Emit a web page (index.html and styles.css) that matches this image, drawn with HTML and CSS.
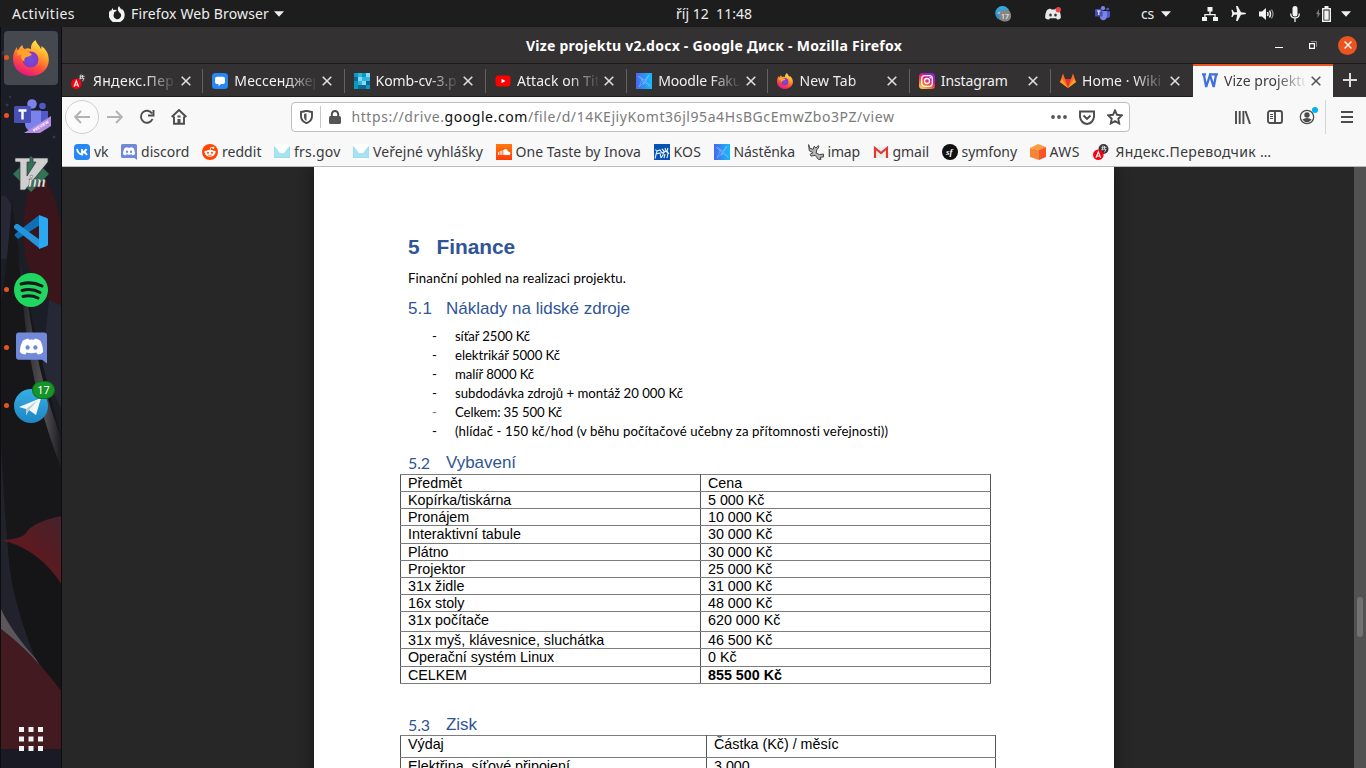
FILE: index.html
```html
<!DOCTYPE html>
<html lang="cs">
<head>
<meta charset="utf-8">
<title>Vize projektu v2.docx - Google Диск</title>
<link rel="stylesheet" href="styles.css">
</head>
<body>
<svg class="defs" width="0" height="0">
  <defs>
    <linearGradient id="gFox" x1=".8" y1="0" x2=".35" y2="1"><stop offset="0" stop-color="#fff44f"/><stop offset=".4" stop-color="#ffa02b"/><stop offset=".7" stop-color="#ff4a3d"/><stop offset="1" stop-color="#e31587"/></linearGradient>
    <radialGradient id="gOrb"><stop offset="0" stop-color="#6f52d8"/><stop offset="1" stop-color="#8636c9"/></radialGradient>
    <linearGradient id="gMood" x1="0" y1="0" x2="1" y2="0"><stop offset="0" stop-color="#4a67ee"/><stop offset="1" stop-color="#12bdf8"/></linearGradient>
    <linearGradient id="gInsta" x1="0.2" y1="1" x2=".8" y2="0"><stop offset="0" stop-color="#ffd04f"/><stop offset=".35" stop-color="#fa5b35"/><stop offset=".6" stop-color="#e0168a"/><stop offset="1" stop-color="#7a25e0"/></linearGradient>
    <linearGradient id="gTele" x1="0" y1="0" x2="0" y2="1"><stop offset="0" stop-color="#37aee2"/><stop offset="1" stop-color="#1d86c4"/></linearGradient>
    <linearGradient id="gSound" x1="0" y1="0" x2="0" y2="1"><stop offset="0" stop-color="#ff7a0e"/><stop offset="1" stop-color="#ff3a08"/></linearGradient>
    <linearGradient id="gStem" x1="0" y1="0" x2="1" y2="0"><stop offset="0" stop-color="#777379" stop-opacity="0"/><stop offset=".6" stop-color="#625f65"/><stop offset="1" stop-color="#19191b"/></linearGradient>
    <linearGradient id="gPetal" x1="0" y1="1" x2="1" y2="0"><stop offset="0" stop-color="#5b151b"/><stop offset=".5" stop-color="#5d1a20"/><stop offset="1" stop-color="#44232c"/></linearGradient>
    <symbol id="firefox" viewBox="0 0 36 36">
      <path fill="url(#gFox)" d="M22.500 0c1 3.500 4 5.500 5.500 9 .5-.5.5-1.500.3-3C33 9 36 14 35.800 20.500 35.400 30 27.500 36 18 36S0 29 0 18.500C0 14 1.600 10 4 7c0 2 .4 2.700.8 3.300C6.200 8 7.500 6.300 9.500 5c-.1 2 .8 3.300 2 4 2.500-1 4.800-.8 6.500.2C17.500 6 19 2.500 22.500 0z"/>
      <circle cx="17.500" cy="19.500" r="8" fill="url(#gOrb)"/>
      <path fill="#ffa42c" d="M4.500 11c3-.6 5.800-.6 8.500.8 2.800.2 5 1 5.800 2.800-1.300 1.800-3 2-5.200 2.400-2.500 1-2.600 2.500-2 4.500-3-1-4-4-3-6.500-1.500-.4-3 0-4.100 1z"/>
    </symbol>
    <symbol id="teams" viewBox="0 0 36 34">
      <circle cx="18" cy="5" r="4.800" fill="#7b83eb"/><circle cx="28.500" cy="7" r="3.300" fill="#5059c9"/>
      <path fill="#5059c9" d="M24 12h10v9a5 5 0 0 1-9 4z"/><path fill="#7b83eb" d="M11 11.500h16V24c0 10-16 12-16 0z"/>
      <rect y="7" width="17" height="17" rx="1.500" fill="#4750b5"/><path stroke="#fff" stroke-width="2.400" d="M4.500 11.500h8M8.500 11v9.500"/>
    </symbol>
    <symbol id="discord" viewBox="0 0 32 32">
      <path fill="#7289da" d="M3 0h26a3 3 0 0 1 3 3v29l-5-4H3a3 3 0 0 1-3-3V3a3 3 0 0 1 3-3z"/>
      <path fill="#fff" d="M7 8.500c3-2 5-2.300 6-2l.6 1q2.600-.4 5 0l.6-1c1-.3 3 0 6 2C27 12 28 16.500 28 20c-1.500 1.800-3.500 2.500-5.500 2.600L21 20.700q-5 1.500-10 0l-1.500 1.900C7.500 22.500 5.500 21.800 4 20c0-3.500 1-8 3-11.500z"/>
      <ellipse cx="12" cy="15.500" rx="2.200" ry="2.400" fill="#7289da"/><ellipse cx="20" cy="15.500" rx="2.200" ry="2.400" fill="#7289da"/>
    </symbol>
    <symbol id="mood" viewBox="0 0 16 16"><path fill="url(#gMood)" d="M0 0h16v16H0z"/><path fill="none" stroke="#a6c4ff" stroke-opacity=".55" stroke-width=".7" d="M2 3l4 3 3 1 4-5-3 6 4 5-6-4-5 5 3-7zM6 6l2 5M12 3L7 12M4 3l7 8"/></symbol>
    <symbol id="transl" viewBox="0 0 16 16"><circle cx="10.500" cy="5" r="5" fill="#383639"/><path fill="none" stroke="#ddd" stroke-width=".9" d="M8.500 3.300h5M10 1.500l-1 5M8.500 5.300h4.500l-1.500 3M11.500 2v3"/><circle cx="5.300" cy="10.700" r="5.300" fill="#f80010"/><path fill="none" stroke="#fff" stroke-width="1.100" d="M3 13.700l2.300-6 2.300 6M3.600 12h3.600"/></symbol>
    <symbol id="frs" viewBox="0 0 16 16"><path fill="#fff" d="M0 0h16v16H0z"/><path fill="#8fdcf0" d="M0 2l3 3 2 3 1 1h4l1-1 2-3 3-3v12H0z"/><path stroke="#fff" stroke-opacity=".45" stroke-width=".5" d="M2 0v16M4 0v16M6 0v16M8 0v16M10 0v16M12 0v16M14 0v16M0 6h16M0 8h16M0 10h16M0 12h16"/></symbol>
    <symbol id="close" viewBox="0 0 10 10"><path d="M.7.700l8.600 8.600M9.300.700L.7 9.300" stroke="currentColor" stroke-width="1.600"/></symbol>
    <symbol id="tri" viewBox="0 0 10 6"><path fill="currentColor" d="M0 .3h10L5 5.700z"/></symbol>
  </defs>
</svg>

<header class="topbar">
  <span class="activities" data-w="63">Activities</span>
  <svg class="appicon" viewBox="0 0 16 16"><path fill="#f2f2f2" d="M10 0c.5 1.500 2 2.500 2.600 4V2.500A8 8 0 1 1 1.300 4l.5 1.500L3.500 2l1 2 3-.3-.3 1.600-2 .7-.3 2a3.700 3.700 0 1 0 5.600-1.600C9 5.500 8 2.500 10 0z"/></svg>
  <span data-w="138">Firefox Web Browser</span>
  <svg class="tri app-tri"><use href="#tri"/></svg>
  <span class="clock" data-w="76">říj 12&nbsp; 11:48</span>
  <div class="tray">
    <div class="slot wide"><svg width="16" height="16" viewBox="0 0 16 16"><circle cx="7.500" cy="7.300" r="7.300" fill="url(#gTele)"/><path fill="#ddd" d="M2 7l8-3-1 6z"/><rect x="4" y="4" width="12" height="11.500" rx="5" fill="#858585"/><text x="10" y="13" class="tiny-count">17</text></svg></div>
    <div class="slot wide"><svg width="16" height="14" viewBox="0 0 16 14"><path fill="#e8e8e8" d="M2 3c2-1.500 4-1.600 4-1l.4.600h3.200L10 2c1-.5 2.500 0 4 1 1.200 2 2 5 1.800 8-1 1-2.500 1.600-3.600 1.600l-1-1.300H5l-1 1.300C2.700 12.600 1.300 12 .2 11 0 8 .8 5 2 3z"/><ellipse cx="5.500" cy="8" rx="1.300" ry="1.500" fill="#333"/><ellipse cx="10.500" cy="8" rx="1.300" ry="1.500" fill="#333"/><circle cx="13.300" cy="2.700" r="2.700" fill="#ef4146"/></svg></div>
    <div class="slot wide"><svg width="16" height="15"><use href="#teams"/></svg></div>
    <div class="slot lang"><span data-w="13">cs</span><svg class="tri"><use href="#tri"/></svg></div>
    <div class="slot s28"><svg width="16" height="14" viewBox="0 0 16 14" fill="#f2f2f2"><path d="M5.500 0h5v4.500H8.700V7h5v3H16v4h-5v-4h1.500V8.200h-9V10H5v4H0v-4h2.300V7h5V4.500H5.500z"/></svg></div>
    <div class="slot s29"><svg width="15" height="15" viewBox="0 0 15 15" fill="#f2f2f2"><path d="M5 0h1.700l3.300 6.300 4 .4q1 .3 1 .8t-1 .8l-4 .4L6.700 15H5l1.200-6.300H3l-1.500 2.200H.4L1.200 7.500.4 3.800h1.100L3 6.300h3.200z"/></svg></div>
    <div class="slot s28"><svg width="16" height="14" viewBox="0 0 16 14"><path fill="#f2f2f2" d="M0 4.500h3l4-3.500v12L3 9.500H0z"/><path fill="none" stroke="#f2f2f2" stroke-width="1.500" d="M8.500 5q1 2 0 4M10.500 3.500q2 3.500 0 7"/><path fill="none" stroke="#999" stroke-width="1.200" d="M12.500 2.500q3 4.500 0 9"/></svg></div>
    <div class="slot s27"><svg width="10" height="16" viewBox="0 0 10 16"><rect x="2.500" width="5" height="10.500" rx="2.500" fill="#f2f2f2"/><path fill="none" stroke="#f2f2f2" stroke-width="1.300" d="M.7 7.500c0 6 8.600 6 8.600 0M5 12v4"/></svg></div>
    <div class="slot s30"><svg width="15" height="16" viewBox="0 0 15 16"><path fill="#777" d="M3 3v4h1.500L1.500 12V8H0z"/><path fill="none" stroke="#f2f2f2" stroke-width="1.400" d="M6.700 2.700h7.600v12.600H6.700z"/><path fill="#f2f2f2" d="M8.500 0h4v2h-4zM8.300 4.500h4.400v9.200H8.300z"/></svg></div>
    <div class="slot s16"><svg class="tri"><use href="#tri"/></svg></div>
  </div>
</header>

<div class="desktop">
  <nav class="dock">
    <svg class="wallpaper" viewBox="0 27 62 741" preserveAspectRatio="none">
      <path fill="#1b1d27" d="M0 27h62v741H0z"/>
      <path fill="#262836" d="M0 197q6-4 9 4l5 8 1 30-9 20H0zM50 290h12v120l-20-40z"/>
      <circle cx="25" cy="37" r="1.500" fill="#383b48"/><circle cx="4" cy="53" r="2.500" fill="#30333e"/><circle cx="10" cy="97" r="1.200" fill="#343744"/><circle cx="54" cy="137" r="1.500" fill="#343744"/><circle cx="7" cy="105" r="1.500" fill="#343744"/>
      <path fill="#3a151b" d="M31 180q12-8 20 10 9 20 11 45v70q-22-4-33-36-6-18-6-40 2-30 8-49z"/>
      <path fill="#17171a" d="M12 198q3 30 8 60 14 78 42 182v180H0V310q8-50 12-112z"/>
      <path fill="url(#gStem)" opacity=".8" d="M17 245q7 30 13 73 12 72 32 122v30Q34 400 25 323z"/>
      <path fill="#22222c" d="M1 440q6 130 14 155l20 65L1 620z"/>
      <path fill="url(#gPetal)" d="M2 540q20-1 24-7 6-11 36-17v70Q38 551 2 540z"/>
      <path fill="#151517" d="M8 542q33 10 54 43v107L35 658Q8 590 8 542z"/>
      <path fill="#5b565a" d="M1 609q10 22 35 50l6 10L1 629z"/>
      <path fill="#431a20" d="M1 629q30 22 61 63v60H1z"/>
      <path fill="#191a23" d="M1 749h61v19H1z"/><path fill="#0d0d0f" d="M0 27h1v741H0zM61 27h1v741h-1z"/>
    </svg>
    <div class="launchers">
      <div class="app focused running"><svg width="36" height="36"><use href="#firefox"/></svg></div>
      <div class="app running"><svg class="nudge" width="37" height="34" viewBox="0 0 37 34"><use href="#teams" width="36" height="34"/><path fill="#b58ae2" d="M10 34L37 17v10L26 34z"/><text class="preview" transform="translate(20 33) rotate(-32)">PREVIEW</text></svg></div>
      <div class="app"><svg width="36" height="36" viewBox="0 0 36 36"><path fill="#327257" d="M18 0l18 18-18 18L0 18z"/><path fill="#cfcfcf" stroke="#333" stroke-width=".7" d="M2 2h15v4h-3v14L23 6h-3V2h15v4L12 34H7V6H2z"/><text x="15" y="31" class="vim">im</text></svg></div>
      <div class="app"><svg width="34" height="34" viewBox="0 0 34 34"><path fill="#0f70b5" d="M2 22l-1-1q-1-1 0-2L24 1l2 1v8L4 24zM25 0l1 10-11 7z"/><path fill="#2494dc" d="M2 9L0 11q-1 1 0 2l25 20 1-8L4 9z"/><path fill="#2aa8f2" d="M25 0l8 3q1 .5 1 2v24q0 2-1 2l-8 3z"/></svg></div>
      <div class="app running"><svg width="34" height="34" viewBox="0 0 34 34"><circle cx="17" cy="17" r="17" fill="#1fd660"/><path fill="none" stroke="#191919" stroke-width="3" stroke-linecap="round" d="M7 11q11-3 21 2M8 17.500q10-2.500 18 2M9 23.500q8-2 15 1.500"/></svg></div>
      <div class="app running"><svg width="31" height="32"><use href="#discord"/></svg></div>
      <div class="app running"><svg width="34" height="34" viewBox="0 0 34 34"><circle cx="17" cy="17" r="17" fill="url(#gTele)"/><path fill="#f5f8fa" d="M5 18L27 9l-5 17-7-5-3 5v-6z"/><path fill="#b6cbdc" d="M12 20l12-9-9 10-3 5z"/></svg><b class="badge">17</b></div>
    </div>
    <svg class="grid-icon" viewBox="0 0 24 24" fill="#f2f2f2"><path d="M0 0h5v5H0zM9.500 0h5v5h-5zM19 0h5v5h-5zM0 9.500h5v5H0zM9.500 9.500h5v5h-5zM19 9.500h5v5h-5zM0 19h5v5H0zM9.500 19h5v5h-5zM19 19h5v5h-5z"/></svg>
  </nav>

  <main class="window">
    <div class="titlebar">
      <b data-w="376">Vize projektu v2.docx - Google Диск - Mozilla Firefox</b>
      <div class="wincontrols">
        <i class="minimize"></i>
        <svg width="8" height="8" viewBox="0 0 8 8" fill="none"><path stroke="#888" d="M2 .5h5.500V6"/><path stroke="#fff" stroke-width="1.200" d="M.6 2.600h4.800v4.800H.6z"/></svg>
        <span class="winclose"><svg width="8" height="8"><use href="#close"/></svg></span>
      </div>
    </div>

    <div class="tabs">
      <div class="tab"><svg class="fav"><use href="#transl"/></svg><span class="label"><span data-w="81">Яндекс.Пер</span></span><svg class="x"><use href="#close"/></svg></div>
      <div class="tab"><svg class="fav" viewBox="0 0 16 16"><rect width="16" height="16" rx="3.500" fill="#2787f5"/><path fill="#fff" d="M5 3.700h6a2 2 0 0 1 2 2V9a2 2 0 0 1-2 2H9l-2.500 2.200V11H5a2 2 0 0 1-2-2V5.700a2 2 0 0 1 2-2z"/></svg><span class="label"><span data-w="87">Мессенджер</span></span><svg class="x"><use href="#close"/></svg></div>
      <div class="tab"><svg class="fav" viewBox="0 0 16 16"><path fill="#0b6994" d="M0 0h16v16H0z"/><path fill="#0799c8" d="M0 0h4v4H0zM8 0h4v4H8zM0 8h4v8H0zM12 12h4v4h-4z"/><path fill="#32b4df" d="M4 0h4v4H4zM4 8h4v4H4zM8 4h4v4H8zM12 4h4v4h-4z"/><path fill="#82dcf4" d="M4 4h4v4H4zM12 0h4v4h-4zM8 8h4v4H8z"/></svg><span class="label"><span data-w="81">Komb-cv-3.p</span></span><svg class="x"><use href="#close"/></svg></div>
      <div class="tab"><svg class="fav" viewBox="0 0 16 16"><rect y="2.500" x=".5" width="15" height="11" rx="3" fill="#f00"/><path fill="#fff" d="M6.500 5.700v4.600l4-2.300z"/></svg><span class="label"><span data-w="83">Attack on Tit</span></span><svg class="x"><use href="#close"/></svg></div>
      <div class="tab"><svg class="fav"><use href="#mood"/></svg><span class="label"><span data-w="83">Moodle Faku</span></span><svg class="x"><use href="#close"/></svg></div>
      <div class="tab"><svg class="fav"><use href="#firefox"/></svg><span class="label"><span data-w="57">New Tab</span></span><svg class="x"><use href="#close"/></svg></div>
      <div class="tab"><svg class="fav" viewBox="0 0 16 16"><rect width="16" height="16" rx="3.500" fill="url(#gInsta)"/><g fill="none" stroke="#fff" stroke-width="1.300"><rect x="2.700" y="2.700" width="10.600" height="10.600" rx="3"/><circle cx="8" cy="8" r="2.500"/></g><circle cx="11.200" cy="4.800" r=".8" fill="#fff"/></svg><span class="label plain"><span data-w="67">Instagram</span></span><svg class="x"><use href="#close"/></svg></div>
      <div class="tab"><svg class="fav" viewBox="0 0 16 16"><path fill="#fc6d26" d="M0 9l3-8.500L5 6h6l2-5.500L16 9l-8 6z"/><path fill="#e5342c" d="M5 6h6l-3 9z"/><path fill="#fca326" d="M0 9l2-3 6 9zM16 9l-2-3-6 9z"/></svg><span class="label"><span data-w="79">Home · Wiki</span></span><svg class="x"><use href="#close"/></svg></div>
      <div class="tab active"><svg class="fav" viewBox="0 0 16 16"><path fill="none" stroke="#3f6fe0" stroke-width="2.300" d="M0 1.300h4M1.700 1l2.500 13L8 2l3.700 12 2.500-13M8 1.300h8"/></svg><span class="label"><span data-w="86">Vize projektu</span></span><svg class="x"><use href="#close"/></svg></div>
      <svg class="newtab" viewBox="0 0 14 14"><path stroke="#ddd" stroke-width="2" d="M7 0v14M0 7h14"/></svg>
    </div>

    <div class="navbar">
      <span class="back"><svg width="16" height="14" viewBox="0 0 16 14"><path class="faint" d="M7 1L1.200 7 7 13M1.500 7H16"/></svg></span>
      <svg width="16" height="14" viewBox="0 0 16 14"><path class="faint" d="M9 1l5.800 6L9 13M14.500 7H0"/></svg>
      <svg width="16" height="16" viewBox="0 0 16 16"><path class="ink" d="M13 4.500A6 6 0 1 0 13.500 10M14.500 1v5.500H9"/></svg>
      <svg width="16" height="16" viewBox="0 0 16 16"><path class="ink" d="M.7 8L8 1l7.300 7M3 7.500v7.300h10V7.500"/><path fill="#4c4c4e" d="M6.500 10h3v5h-3zM6.500 6.500h3v2h-3z"/></svg>
      <div class="urlbar">
        <svg width="13" height="14" viewBox="0 0 13 14"><path class="ink" d="M1 2q3-.5 5.500-1.200Q9 1.500 12 2v4c0 4-2.500 6-5.500 7.200C3.500 12 1 10 1 6z"/><path fill="#555" d="M6.500 3.200L4 4v3c0 2 1 3.200 2.500 4z"/></svg>
        <i class="rule"></i>
        <svg width="12" height="14" viewBox="0 0 12 14"><rect y="6" width="12" height="8" rx="1.500" fill="#555"/><path class="ink" d="M2.800 7V4q.5-3 3.200-3t3.200 3v3"/></svg>
        <span class="url" data-w="543">https://drive.<em>google.com</em>/file/d/14KEjiyKomt36jl95a4HsBGcEmwZbo3PZ/view</span>
        <div class="urlactions">
          <svg width="16" height="4" viewBox="0 0 16 4" fill="#555"><circle cx="2" cy="2" r="1.900"/><circle cx="8" cy="2" r="1.900"/><circle cx="14" cy="2" r="1.900"/></svg>
          <svg width="16" height="15" viewBox="0 0 16 15"><path class="ink" d="M1 1.500h14V7q-1 6-7 7Q2 13 1 7zM4.500 5.500L8 9l3.500-3.500"/></svg>
          <svg width="16" height="16" viewBox="0 0 16 16"><path class="ink" d="M8 1.500l2 4.300 4.800.6-3.500 3.300.9 4.800L8 12.200l-4.200 2.300.9-4.800L1.200 6.400 6 5.800z"/></svg>
        </div>
      </div>
      <div class="tools">
        <svg width="16" height="14" viewBox="0 0 16 14"><path class="ink" d="M1 1v13M4.700 1v13M8.400 1v13M10.500 1l4.500 13"/></svg>
        <svg width="16" height="14" viewBox="0 0 16 14"><rect class="ink" x="1" y="1" width="14" height="12" rx="2"/><path class="ink" d="M8 1v12"/><path stroke="#4c4c4e" d="M3 4.500h3M3 6.500h3M3 8.500h3"/></svg>
        <svg width="19" height="18" viewBox="0 0 19 18"><circle cx="8" cy="10" r="6.700" fill="none" stroke="#4c4c4e" stroke-width="1.300"/><circle cx="8" cy="8" r="2.700" fill="#4c4c4e"/><path fill="#4c4c4e" d="M3.300 12.500Q8 9.500 12.700 12.500 8 18 3.300 12.500z"/><circle cx="16" cy="3" r="3" fill="#00b3f4"/></svg>
        <i class="toolrule"></i>
        <svg width="12" height="12" viewBox="0 0 12 12"><path class="ink" d="M0 1h12M0 6h12M0 11h12"/></svg>
      </div>
    </div>

    <div class="bookmarks">
      <a><svg class="fav" viewBox="0 0 16 16"><rect width="16" height="16" rx="3.500" fill="#2787f5"/><path fill="none" stroke="#fff" stroke-width="1.800" d="M3 5q1 5 5 5.500V5M8 8.200Q11 8 12.500 5M8 8q3.500 0 5 3"/></svg><span data-w="14.5">vk</span></a>
      <a><svg class="fav"><use href="#discord"/></svg><span data-w="48.5">discord</span></a>
      <a><svg class="fav" viewBox="0 0 16 16"><circle cx="8" cy="8" r="8" fill="#ff4500"/><ellipse cx="8" cy="9.300" rx="5" ry="3.500" fill="#fff"/><circle cx="3.500" cy="8" r="1.200" fill="#fff"/><circle cx="12.500" cy="8" r="1.200" fill="#fff"/><circle cx="11.300" cy="3.800" r="1.100" fill="#fff"/><path fill="none" stroke="#fff" stroke-width=".8" d="M8 6.500l.8-3.200 2.500.5"/><circle cx="6" cy="8.800" r="1" fill="#ff4500"/><circle cx="10" cy="8.800" r="1" fill="#ff4500"/><path fill="none" stroke="#ff4500" stroke-width=".7" d="M6 11q2 1 4 0"/></svg><span data-w="39.5">reddit</span></a>
      <a><svg class="fav"><use href="#frs"/></svg><span data-w="46.5">frs.gov</span></a>
      <a><svg class="fav"><use href="#frs"/></svg><span data-w="110">Veřejné vyhlášky</span></a>
      <a><svg class="fav" viewBox="0 0 16 16"><path fill="url(#gSound)" d="M0 0h16v16H0z"/><path fill="#fff" d="M8 11V5.500q3-1.500 4 2 2.500 0 2.500 2 0 1.500-2 1.500z"/><path stroke="#fff" stroke-width=".9" d="M2.500 8v3M4.200 7v4M5.800 6.500V11M7.300 6v5"/></svg><span data-w="125.5">One Taste by Inova</span></a>
      <a><svg class="fav" viewBox="0 0 16 16"><path fill="#0754b4" d="M0 0h16v16H0z"/><path fill="none" stroke="#e6f0fc" stroke-width="1.100" d="M1.500 5.500l1.500 2-1 3-1 4M2 10l4-1 1 5M3 7l3-1 2 3 2-1M8 5l2 2-1 4-2 3M9 9l3-2 2 2-1 5M11 4l1 3M14 4l-1 3 2 3M11 10l-1 4"/></svg><span data-w="27.5">KOS</span></a>
      <a><svg class="fav"><use href="#mood"/></svg><span data-w="61.5">Nástěnka</span></a>
      <a><svg class="fav" viewBox="0 0 16 16"><path fill="#b5b5b5" stroke="#444" stroke-width="1" d="M.6.600l1.200 3.600 3.400 1.200 1-3.200L8 4l2.300-2.500.7 1.400-2.300 3-.5 3.300 3.400 1.400 3.800-.6v3l-3.200.3.800 2.100h-2.600l-3.100-4-4.300.7-.8-1.800L5 8.500 1.300 6.800z"/></svg><span data-w="32.5">imap</span></a>
      <a><svg class="fav" viewBox="0 0 16 16"><path fill="#eee" d="M1 3h14v11H1z"/><path fill="none" stroke="#dd3c35" stroke-width="2.200" d="M2 14V4l6 5 6-5v10"/></svg><span data-w="36.5">gmail</span></a>
      <a><svg class="fav" viewBox="0 0 16 16"><circle cx="8" cy="8" r="8" fill="#111"/><text x="4" y="11" class="sf">sf</text></svg><span data-w="55.5">symfony</span></a>
      <a><svg class="fav" viewBox="0 0 16 16"><path fill="#ff9b3b" d="M8 0l8 3-7 3L0 4z"/><path fill="#f68536" d="M0 4l9 2v10l-9-3z"/><path fill="#f9542b" d="M16 3v10l-7 3V6z"/></svg><span data-w="30.5">AWS</span></a>
      <a class="roomy"><svg class="fav"><use href="#transl"/></svg><span data-w="156">Яндекс.Переводчик …</span></a>
    </div>

    <div class="viewer">
      <article class="page">
        <h1><span class="num" data-w="11.6">5</span><span data-w="78.5">Finance</span></h1>
        <p class="body intro"><span data-w="218">Finanční pohled na realizaci projektu.</span></p>
        <h2 class="h51"><span class="num" data-w="24">5.1</span><span data-w="184">Náklady na lidské zdroje</span></h2>
        <ul class="body costs">
          <li><span data-w="75">síťař 2500 Kč</span></li>
          <li><span data-w="105">elektrikář 5000 Kč</span></li>
          <li><span data-w="79">malíř 8000 Kč</span></li>
          <li><span data-w="228">subdodávka zdrojů + montáž 20 000 Kč</span></li>
          <li class="light"><span data-w="107">Celkem: 35 500 Kč</span></li>
          <li><span data-w="433.5">(hlídač - 150 kč/hod (v běhu počítačové učebny za přítomnosti veřejnosti))</span></li>
        </ul>
        <h2 class="h52"><span class="num alt" data-w="22">5.2</span><span data-w="70">Vybavení</span></h2>
        <table class="equipment">
          <tr><td>Předmět</td><td>Cena</td></tr>
          <tr><td>Kopírka/tiskárna</td><td>5 000 Kč</td></tr>
          <tr><td>Pronájem</td><td>10 000 Kč</td></tr>
          <tr><td>Interaktivní tabule</td><td>30 000 Kč</td></tr>
          <tr><td>Plátno</td><td>30 000 Kč</td></tr>
          <tr><td>Projektor</td><td>25 000 Kč</td></tr>
          <tr><td>31x židle</td><td>31 000 Kč</td></tr>
          <tr><td>16x stoly</td><td>48 000 Kč</td></tr>
          <tr class="tall"><td>31x počítače</td><td>620 000 Kč</td></tr>
          <tr><td>31x myš, klávesnice, sluchátka</td><td>46 500 Kč</td></tr>
          <tr><td>Operační systém Linux</td><td>0 Kč</td></tr>
          <tr><td>CELKEM</td><td><b>855 500 Kč</b></td></tr>
        </table>
        <h2 class="h53"><span class="num alt" data-w="22">5.3</span><span data-w="31">Zisk</span></h2>
        <table class="profit">
          <tr><td>Výdaj</td><td>Částka (Kč) / měsíc</td></tr>
          <tr><td>Elektřina, síťové připojení</td><td>3 000</td></tr>
        </table>
      </article>
      <div class="scrollbar"><i></i></div>
    </div>
  </main>
</div>
<script src="fit.js"></script>
</body>
</html>
```
FILE: styles.css
```css
* { box-sizing: border-box; }
body { margin: 0; width: 1366px; height: 768px; overflow: hidden; background: #272727; font: 14px/20px "Noto Sans", sans-serif; }
svg { display: block; flex: none; }
[data-w] { display: inline-block; white-space: pre; }
.defs { position: absolute; }

.topbar { position: relative; display: flex; align-items: center; height: 27px; padding-left: 12px; background: #1d1d1d; color: #eee; }
.appicon { width: 16px; height: 16px; margin: 0 6px 0 34px; }
.tri { width: 10px; height: 6px; }
.app-tri { margin-left: 5px; }
.clock { margin-left: 392px; }
.tray { display: flex; height: 27px; margin-left: auto; padding-right: 12px; }
.slot { display: flex; align-items: center; justify-content: center; }
.wide { width: 50px; }
.lang { width: 68px; gap: 7px; justify-content: flex-start; padding-left: 13px; }
.s28 { width: 28px; }
.s29 { width: 29px; }
.s27 { width: 27px; }
.s30 { width: 30px; }
.s16 { width: 16px; }
.tiny-count { font: 7px "Noto Sans", sans-serif; fill: #fff; text-anchor: middle; }

.desktop { display: flex; height: 741px; }
.dock { position: relative; width: 62px; height: 741px; display: flex; flex-direction: column; justify-content: space-between; align-items: center; padding: 2px 0 17px; }
.wallpaper { position: absolute; inset: 0; width: 62px; height: 741px; }
.launchers { position: relative; }
.app { position: relative; display: flex; align-items: center; justify-content: center; width: 54px; height: 54px; margin: 2px 0 4px; border-radius: 4px; }
.focused { background: #46484f; }
.running::before { content: ""; position: absolute; left: 0; top: 24px; width: 5px; height: 5px; border-radius: 50%; background: #e95420; }
.nudge { margin-left: 3px; }
.preview { font: bold 4px "Noto Sans", sans-serif; fill: #fff; }
.vim { font: italic bold 17px "Liberation Serif", serif; fill: #eee; stroke: #333; stroke-width: .4px; }
.badge { position: absolute; left: 28px; top: 2px; width: 23px; height: 18px; border-radius: 9px; border: 1px solid #0c6b1c; background: #169427; color: #fff; font: 11px/16px "Noto Sans", sans-serif; text-align: center; }
.grid-icon { position: relative; width: 24px; height: 24px; }

.window { width: 1304px; height: 741px; display: flex; flex-direction: column; }
.titlebar { position: relative; height: 37px; display: flex; align-items: center; justify-content: center; padding: 1px 0 0; background: #333132; border-bottom: 1px solid #1c1b1c; color: #fff; }
.wincontrols { position: absolute; right: 9px; top: 8px; display: flex; align-items: center; height: 20px; }
.minimize { width: 8px; height: 1px; margin: 4px 26px 0 0; background: #fff; }
.winclose { display: grid; place-items: center; width: 19px; height: 19px; margin-left: 21px; border-radius: 50%; background: #e95420; color: #fff; }

.tabs { height: 33px; display: flex; background: #333132; color: #f0f0f0; }
.tab { position: relative; width: 141.3px; flex: none; display: flex; align-items: center; padding: 2px 0 0 9px; border-bottom: 1px solid #1c1b1c; }
.tab::after { content: ""; position: absolute; right: 0; top: 5px; width: 1px; height: 24px; background: #646263; }
.tab:nth-child(8)::after, .active::after { display: none; }
.fav { width: 16px; height: 16px; overflow: hidden; }
.label { width: 81px; margin: 0 6.500px 0 6px; overflow: hidden; white-space: nowrap; -webkit-mask-image: linear-gradient(90deg, #000 52px, transparent 84px); mask-image: linear-gradient(90deg, #000 52px, transparent 84px); }
.plain { -webkit-mask-image: none; mask-image: none; }
.x { width: 10px; height: 10px; color: #dedede; }
.active { width: 140px; margin-left: .6px; background: #f8f8f8; color: #3d3d3d; border-top: 2px solid #e95420; border-bottom: 0; padding: 0 0 1px 9px; }
.active .x { color: #555; }
.newtab { width: 14px; height: 14px; margin: 9px 0 0 10px; }

.navbar { height: 41px; display: flex; align-items: center; padding: 0 0 1px 3px; background: #f8f8f8; }
.back { display: grid; place-items: center; width: 34px; height: 34px; margin-right: 8px; border: 1px solid #cfcfcf; border-radius: 50%; background: #fbfbfb; }
.navbar > svg { margin-right: 16px; }
.faint { fill: none; stroke: #b3b3b3; stroke-width: 1.9; }
.ink { fill: none; stroke: #4c4c4e; stroke-width: 1.9; }
.urlbar { display: flex; align-items: center; width: 839px; height: 30px; margin-left: 88px; padding: 0 6px 0 8px; border: 1px solid #bdbdbd; border-radius: 4px; background: #fff; }
.rule { width: 1px; height: 22px; margin: 0 8px 0 7px; background: #c8c8c8; }
.url { margin-left: 10.500px; color: #7b7b7b; }
.url em { font-style: normal; color: #0c0c0d; }
.urlactions { display: flex; align-items: center; gap: 12px; margin-left: auto; }
.tools { display: flex; align-items: center; margin-left: 105px; height: 40px; }
.tools svg + svg { margin-left: 16px; }
.tools svg:nth-child(3) { margin: -2px 0 0 16px; }
.toolrule { width: 1px; height: 34px; margin: 0 15px 0 7px; background: #d6d6d6; }

.bookmarks { height: 29px; display: flex; align-items: center; gap: 12.5px; padding-left: 12px; background: #f8f8f8; border-bottom: 1px solid #bcbcbc; color: #3a3a3c; }
.bookmarks a { display: flex; align-items: center; gap: 4px; }
.bookmarks .roomy { gap: 7px; }
.sf { font: italic bold 9px "Liberation Serif", serif; fill: #fff; }

.viewer { position: relative; height: 601px; background: #272727; display: flex; padding-left: 252px; overflow: hidden; }
.page { width: 800px; height: 700px; flex: none; padding: 68px 0 0 94px; background: #fff; box-shadow: 0 0 16px rgba(0, 0, 0, .45); color: #000; }
.scrollbar { width: 12px; margin-left: auto; padding: 430px 3px 0; background: #525252; }
.scrollbar i { display: block; width: 6px; height: 40px; border-radius: 3px; background: #727272; }

h1, h2, p, ul { margin: 0; padding: 0; }
h1 { display: flex; gap: 17px; height: 24px; font: bold 20.9px/24px "Liberation Sans", sans-serif; color: #2f5597; }
h2 { display: flex; height: 22px; font: 17px/22px "Liberation Sans", sans-serif; color: #2f5597; }
h2 .num { margin-right: 14px; }
h2 .alt { font-family: Lato, sans-serif; font-size: 16px; margin-right: 16px; }
.body { font: 13.2px/19px Lato, sans-serif; }
.intro { margin-top: 10px; }
.h51 { margin-top: 10px; }
.costs { margin-top: 7px; list-style: none; }
.costs li { height: 19px; padding-left: 24px; display: flex; }
.costs li::before { content: "-"; width: 23px; }
.costs .light::before { color: #777; }
.h52 { margin-top: 11px; }
table { border-collapse: collapse; table-layout: fixed; margin-left: -8px; font: 14.3px/16px "Liberation Sans", sans-serif; }
td { border: 1px solid #7c7c7c; border-left-color: #555; border-right-color: #555; padding: 0 0 0 7px; height: 17.170px; vertical-align: top; white-space: nowrap; }
.equipment { width: 591px; }
.equipment td:first-child { width: 300px; }
.tall td { height: 20px; }
.h53 { margin-top: 30px; }
.profit { width: 596px; margin-top: -1px; }
.profit td { height: 22px; line-height: 17px; }
.profit td:first-child { width: 306px; }
```
FILE: fit.js
```js
// Tracks each label so that it fills the width named in data-w.
document.querySelectorAll("[data-w]").forEach(function (el) {
  var target = parseFloat(el.dataset.w);
  var natural = el.getBoundingClientRect().width;
  var count = Array.from(el.textContent).length;
  el.style.letterSpacing = ((target - natural) / count).toFixed(3) + "px";
});
```
